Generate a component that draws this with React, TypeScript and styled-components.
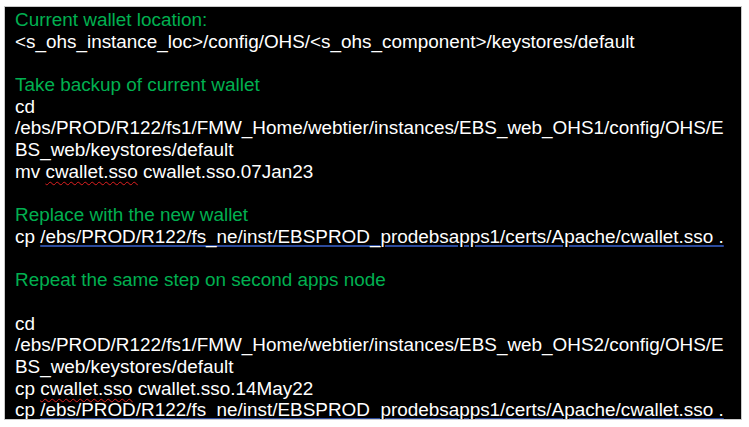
import React from "react";
import styled, { createGlobalStyle } from "styled-components";

const Global = createGlobalStyle`
  html, body { margin: 0; padding: 0; background: #ffffff; }
  body { font-family: "Liberation Sans", Arial, sans-serif; }
`;

const Frame = styled.div`
  margin: 6px 7px 0 4px;
  height: 414px;
  box-sizing: border-box;
  background: #000000;
  border: 1px solid #c9c9c9;
  padding: 2px 0 0 10px;
  overflow: hidden;
`;

const Line = styled.div<{ $tone?: "green" | "white" }>`
  font-family: "Liberation Sans", Arial, sans-serif;
  font-size: 18.9px;
  line-height: 21.7px;
  height: 21.7px;
  white-space: pre;
  color: ${(p) => (p.$tone === "green" ? "#00b050" : "#ffffff")};
`;

const Spell = styled.span`
  text-decoration: underline wavy #e02020;
  text-decoration-thickness: 1px;
  text-underline-offset: 3px;
`;

const Link = styled.span`
  text-decoration: underline #2b4a9c;
  text-decoration-thickness: 2px;
  text-underline-offset: 2px;
`;

export default function App() {
  return (
    <>
      <Global />
      <Frame>
        <Line $tone="green">Current wallet location:</Line>
        <Line>{"<s_ohs_instance_loc>/config/OHS/<s_ohs_component>/keystores/default"}</Line>
        <Line> </Line>
        <Line $tone="green">Take backup of current wallet</Line>
        <Line>cd</Line>
        <Line>/ebs/PROD/R122/fs1/FMW_Home/webtier/instances/EBS_web_OHS1/config/OHS/E</Line>
        <Line>BS_web/keystores/default</Line>
        <Line>
          mv <Spell>cwallet.sso</Spell> cwallet.sso.07Jan23
        </Line>
        <Line> </Line>
        <Line $tone="green">Replace with the new wallet</Line>
        <Line>
          cp <Link>/ebs/PROD/R122/fs_ne/inst/EBSPROD_prodebsapps1/certs/Apache/cwallet.sso .</Link>
        </Line>
        <Line> </Line>
        <Line $tone="green">Repeat the same step on second apps node</Line>
        <Line> </Line>
        <Line>cd</Line>
        <Line>/ebs/PROD/R122/fs1/FMW_Home/webtier/instances/EBS_web_OHS2/config/OHS/E</Line>
        <Line>BS_web/keystores/default</Line>
        <Line>
          cp <Spell>cwallet.sso</Spell> cwallet.sso.14May22
        </Line>
        <Line>
          cp <Link>/ebs/PROD/R122/fs_ne/inst/EBSPROD_prodebsapps1/certs/Apache/cwallet.sso .</Link>
        </Line>
      </Frame>
    </>
  );
}
